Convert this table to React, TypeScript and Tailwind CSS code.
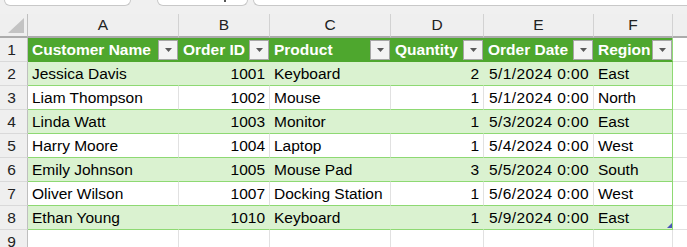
import React from "react";

const cols = ["A", "B", "C", "D", "E", "F"];
const headers = ["Customer Name", "Order ID", "Product", "Quantity", "Order Date", "Region"];
const rows: string[][] = [
  ["Jessica Davis", "1001", "Keyboard", "2", "5/1/2024 0:00", "East"],
  ["Liam Thompson", "1002", "Mouse", "1", "5/1/2024 0:00", "North"],
  ["Linda Watt", "1003", "Monitor", "1", "5/3/2024 0:00", "East"],
  ["Harry Moore", "1004", "Laptop", "1", "5/4/2024 0:00", "West"],
  ["Emily Johnson", "1005", "Mouse Pad", "3", "5/5/2024 0:00", "South"],
  ["Oliver Wilson", "1007", "Docking Station", "1", "5/6/2024 0:00", "West"],
  ["Ethan Young", "1010", "Keyboard", "1", "5/9/2024 0:00", "East"],
];
const rightAligned = [false, true, false, true, true, false];

function FilterButton() {
  return (
    <div className="w-[20px] h-[20px] bg-[#f3f3f3] border border-[#a6a6a6] flex items-center justify-center shrink-0">
      <svg width="7" height="4" viewBox="0 0 7 4">
        <polygon points="0,0 7,0 3.5,4" fill="#595959" />
      </svg>
    </div>
  );
}

function RowHeader({ n }: { n: number }) {
  return (
    <div className="h-[24px] bg-[#efefef] border-r border-b border-r-[#bfbfbf] border-b-[#d9d9d9] flex items-center justify-center pr-[4px] text-[15.5px] text-[#222]">
      {n}
    </div>
  );
}

export default function App() {
  return (
    <div className="w-[687px] h-[247px] overflow-hidden bg-white font-['Liberation_Sans',Arial,sans-serif] text-black">
      {/* top strip with tabs */}
      <div className="h-[14px] bg-[#f0f0f0] flex items-start">
        <div className="ml-[4px] w-[127px] h-[6px] bg-white border border-t-0 border-[#c8c8c8] rounded-b-[6px]" />
        <div className="ml-[26px] w-[91px] h-[6px] bg-white border border-t-0 border-[#c8c8c8] rounded-b-[6px] flex">
          <div className="ml-[66px] w-[2px] h-[2px] bg-[#555]" />
        </div>
        <div className="ml-[5px] flex-1 h-[6px] bg-white border-l border-b border-[#c8c8c8] rounded-bl-[6px]" />
      </div>

      <div className="grid grid-cols-[28px_151px_91px_121px_93px_110px_79px_1fr]">
        {/* column headers */}
        <div className="h-[24px] bg-[#efefef] border-r border-b-2 border-r-[#bfbfbf] border-b-[#ababab] relative">
          <svg className="absolute left-[8px] top-[4px]" width="17" height="16" viewBox="0 0 17 16">
            <polygon points="16,0 16,15 0,15" fill="#c3c3c3" />
          </svg>
        </div>
        {cols.map((c) => (
          <div
            key={c}
            className="h-[24px] bg-[#efefef] border-r border-b-2 border-r-[#d2d2d2] border-b-[#ababab] flex items-center justify-center text-[15.5px] text-[#222]"
          >
            {c}
          </div>
        ))}
        <div className="h-[24px] bg-[#efefef] border-b-2 border-b-[#ababab]" />

        {/* row 1: table header */}
        <RowHeader n={1} />
        {headers.map((h, i) => (
          <div
            key={h}
            className={
              i === 5
                ? "h-[24px] bg-[#4ea72e] border-r border-b border-r-[#8ed973] border-b-[#4ea72e] flex items-center justify-between pl-[4px] font-bold text-white text-[15.5px]"
                : "h-[24px] bg-[#4ea72e] border-r border-b border-r-[#4ea72e] border-b-[#4ea72e] flex items-center justify-between pl-[4px] font-bold text-white text-[15.5px]"
            }
          >
            <span className="whitespace-nowrap">{h}</span>
            <FilterButton />
          </div>
        ))}
        <div className="h-[24px] border-b border-b-[#e1e1e1]" />

        {/* data rows */}
        {rows.map((r, ri) => {
          const banded = ri % 2 === 0;
          return (
            <React.Fragment key={ri}>
              <RowHeader n={ri + 2} />
              {r.map((v, ci) => {
                const base = banded
                  ? ci === 5
                    ? "bg-[#daf2d0] border-r-[#8ed973]"
                    : "bg-[#daf2d0] border-r-[#daf2d0]"
                  : ci === 5
                  ? "bg-white border-r-[#8ed973]"
                  : "bg-white border-r-[#e1e1e1]";
                const align = rightAligned[ci] ? "justify-end pr-[4px]" : "justify-start pl-[4px]";
                const isLast = ri === rows.length - 1 && ci === 5;
                return (
                  <div
                    key={ci}
                    className={`h-[24px] border-r border-b border-b-[#8ed973] flex items-center text-[15.5px] whitespace-nowrap overflow-hidden relative ${base} ${align}`}
                  >
                    <span className={ci === 4 ? "tracking-[0.4px]" : ""}>{v}</span>
                    {isLast && (
                      <svg className="absolute right-0 bottom-[1px]" width="5" height="5" viewBox="0 0 5 5">
                        <polygon points="5,0 5,5 0,5" fill="#4a55b8" />
                      </svg>
                    )}
                  </div>
                );
              })}
              <div className="h-[24px] border-b border-b-[#e1e1e1]" />
            </React.Fragment>
          );
        })}

        {/* row 9 */}
        <RowHeader n={9} />
        {cols.map((c) => (
          <div key={c} className="h-[24px] bg-white border-r border-b border-r-[#e1e1e1] border-b-[#e1e1e1]" />
        ))}
        <div className="h-[24px] border-b border-b-[#e1e1e1]" />
      </div>
    </div>
  );
}
